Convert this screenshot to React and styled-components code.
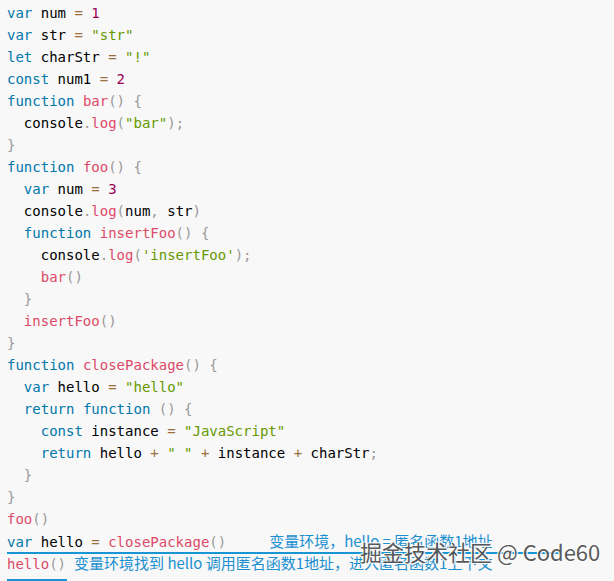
import React from 'react';
import styled, { createGlobalStyle } from 'styled-components';

const GlobalStyle = createGlobalStyle`
  html, body {
    margin: 0;
    padding: 0;
    background: #f8f8f8;
  }
`;

const Page = styled.div`
  position: relative;
  width: 614px;
  height: 581px;
  overflow: hidden;
  background: #f8f8f8;
`;

const Code = styled.div`
  padding: 2px 7px;
  font-family: "DejaVu Sans Mono", "Liberation Mono", monospace;
  font-size: 14px;
  color: #000;
`;

const Line = styled.div`
  height: 22px;
  line-height: 22px;
  white-space: pre;
`;

const Kw = styled.span`color: #07a;`;
const Fn = styled.span`color: #dd4a68;`;
const Str = styled.span`color: #690;`;
const Num = styled.span`color: #905;`;
const Op = styled.span`color: #9a6e3a;`;
const P = styled.span`color: #999;`;

const MarkedLine = styled.div`
  height: 22px;
  line-height: 22px;
  white-space: pre;
  width: 553px;
  border-bottom: 2px solid #1a95d4;
  margin-bottom: -2px;
`;

const Note = styled.span`
  font-family: "Noto Sans CJK SC", "Noto Sans", sans-serif;
  font-size: 15px;
  color: #1a8fd0;
  white-space: pre;
  margin-left: ${(p) => p.$gap}px;
`;

const Under = styled.span`
  display: inline-block;
  height: 22px;
  line-height: 22px;
  position: relative;
  &::after {
    content: '';
    position: absolute;
    left: 0;
    right: -1px;
    bottom: -6px;
    height: 2px;
    background: #1a95d4;
  }
`;

const Watermark = styled.div`
  position: absolute;
  left: 360px;
  top: 535px;
  font-family: "Noto Sans CJK SC", "Noto Sans", sans-serif;
  font-size: 22px;
  color: #4a4a4a;
  white-space: nowrap;
  text-shadow: 1px 1px 0 #fff, -1px -1px 0 #fff, 1px -1px 0 #fff, -1px 1px 0 #fff;
  opacity: 0.9;
`;

const I = ({ n }) => <span>{' '.repeat(n)}</span>;
const S = () => <span>{' '}</span>;

export default function App() {
  return (
    <Page>
      <GlobalStyle />
      <Code>
        <Line><Kw>var</Kw> num <Op>=</Op><S /><Num>1</Num></Line>
        <Line><Kw>var</Kw> str <Op>=</Op><S /><Str>"str"</Str></Line>
        <Line><Kw>let</Kw> charStr <Op>=</Op><S /><Str>"!"</Str></Line>
        <Line><Kw>const</Kw> num1 <Op>=</Op><S /><Num>2</Num></Line>
        <Line><Kw>function</Kw><S /><Fn>bar</Fn><P>()</P><S /><P>{'{'}</P></Line>
        <Line><I n={2} />console<P>.</P><Fn>log</Fn><P>(</P><Str>"bar"</Str><P>);</P></Line>
        <Line><P>{'}'}</P></Line>
        <Line><Kw>function</Kw><S /><Fn>foo</Fn><P>()</P><S /><P>{'{'}</P></Line>
        <Line><I n={2} /><Kw>var</Kw> num <Op>=</Op><S /><Num>3</Num></Line>
        <Line><I n={2} />console<P>.</P><Fn>log</Fn><P>(</P>num<P>,</P> str<P>)</P></Line>
        <Line><I n={2} /><Kw>function</Kw><S /><Fn>insertFoo</Fn><P>()</P><S /><P>{'{'}</P></Line>
        <Line><I n={4} />console<P>.</P><Fn>log</Fn><P>(</P><Str>'insertFoo'</Str><P>);</P></Line>
        <Line><I n={4} /><Fn>bar</Fn><P>()</P></Line>
        <Line><I n={2} /><P>{'}'}</P></Line>
        <Line><I n={2} /><Fn>insertFoo</Fn><P>()</P></Line>
        <Line><P>{'}'}</P></Line>
        <Line><Kw>function</Kw><S /><Fn>closePackage</Fn><P>()</P><S /><P>{'{'}</P></Line>
        <Line><I n={2} /><Kw>var</Kw> hello <Op>=</Op><S /><Str>"hello"</Str></Line>
        <Line><I n={2} /><Kw>return</Kw><S /><Kw>function</Kw><S /><P>()</P><S /><P>{'{'}</P></Line>
        <Line><I n={4} /><Kw>const</Kw> instance <Op>=</Op><S /><Str>"JavaScript"</Str></Line>
        <Line><I n={4} /><Kw>return</Kw> hello <Op>+</Op><S /><Str>" "</Str><S /><Op>+</Op> instance <Op>+</Op> charStr<P>;</P></Line>
        <Line><I n={2} /><P>{'}'}</P></Line>
        <Line><P>{'}'}</P></Line>
        <Line><Fn>foo</Fn><P>()</P></Line>
        <MarkedLine>
          <Kw>var</Kw> hello <Op>=</Op><S /><Fn>closePackage</Fn><P>()</P>
          <Note $gap={43}>变量环境，hello = 匿名函数1地址</Note>
        </MarkedLine>
        <Line>
          <Under><Fn>hello</Fn><P>()</P></Under>
          <Note $gap={8}>变量环境找到 hello 调用匿名函数1地址，进入匿名函数1上下文</Note>
        </Line>
      </Code>
      <Watermark>掘金技术社区 @ Code60</Watermark>
    </Page>
  );
}
